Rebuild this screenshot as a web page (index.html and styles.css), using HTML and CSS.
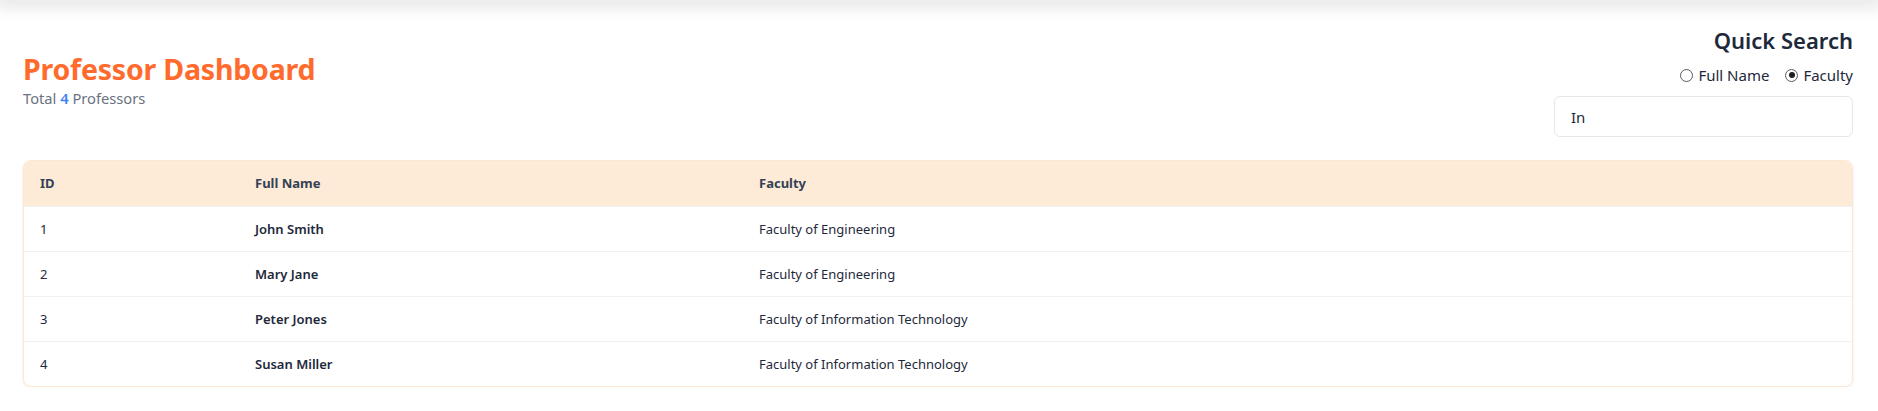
FILE: index.html
```html
<!DOCTYPE html>
<html lang="en">
<head>
<meta charset="utf-8">
<title>Professor Dashboard</title>
<link rel="stylesheet" href="styles.css">
</head>
<body>
<div class="topbar"></div>
<main class="page">
  <header class="head">
    <div class="head-left">
      <h1 class="title">Professor Dashboard</h1>
      <p class="subtitle">Total <span class="count">4</span> Professors</p>
    </div>
    <div class="search">
      <h2 class="search-title">Quick Search</h2>
      <div class="radios">
        <label class="radio"><span class="dot"></span>Full Name</label>
        <label class="radio"><span class="dot checked"></span>Faculty</label>
      </div>
      <div class="input">In</div>
    </div>
  </header>
  <section class="card">
    <table class="table">
      <thead>
        <tr>
          <th class="col-id">ID</th>
          <th class="col-name">Full Name</th>
          <th class="col-fac">Faculty</th>
        </tr>
      </thead>
      <tbody>
        <tr><td>1</td><td class="name">John Smith</td><td>Faculty of Engineering</td></tr>
        <tr><td>2</td><td class="name">Mary Jane</td><td>Faculty of Engineering</td></tr>
        <tr><td>3</td><td class="name">Peter Jones</td><td>Faculty of Information Technology</td></tr>
        <tr><td>4</td><td class="name">Susan Miller</td><td>Faculty of Information Technology</td></tr>
      </tbody>
    </table>
  </section>
</main>
</body>
</html>
```
FILE: styles.css
```css
* { box-sizing: border-box; }
html, body { margin: 0; padding: 0; background: #ffffff; }
body {
  font-family: "Noto Sans", "Open Sans", sans-serif;
  color: #1f2937;
  overflow: hidden;
}
.topbar {
  height: 0;
  box-shadow: 0 0 16px 6px rgba(0, 0, 0, 0.13);
}
.page {
  padding: 25px 25px 0 23px;
}
.head {
  display: flex;
  justify-content: space-between;
  align-items: flex-start;
}
.head-left { margin-top: 25px; }
.title {
  margin: 0;
  font-size: 28.5px;
  line-height: 38px;
  font-weight: 700;
  color: #ff6b2c;
  letter-spacing: -0.2px;
}
.subtitle {
  margin: 0;
  font-size: 14.7px;
  line-height: 20px;
  color: #6b7280;
}
.count { color: #3b82f6; font-weight: 600; }
.search {
  display: flex;
  flex-direction: column;
  align-items: flex-end;
}
.search-title {
  margin: 0;
  font-size: 22px;
  line-height: 30px;
  font-weight: 600;
  color: #1e293b;
}
.radios {
  display: flex;
  gap: 16px;
  margin-top: 10px;
  font-size: 15px;
  line-height: 20px;
  color: #1e293b;
}
.radio { display: flex; align-items: center; gap: 5px; }
.dot {
  width: 13px;
  height: 13px;
  border: 1px solid #555b63;
  border-radius: 50%;
  display: inline-flex;
  align-items: center;
  justify-content: center;
}
.dot.checked::after {
  content: "";
  width: 6px;
  height: 6px;
  border-radius: 50%;
  background: #1f1f1f;
}
.input {
  margin-top: 11px;
  width: 299px;
  height: 41px;
  border: 1px solid #e5e7eb;
  border-radius: 6px;
  padding: 0 16px;
  display: flex;
  align-items: center;
  font-size: 15px;
  color: #1f2937;
}
.card {
  margin-top: 23px;
  border: 1px solid #fbe7d2;
  border-radius: 8px;
  overflow: hidden;
  box-shadow: 0 1px 3px rgba(0, 0, 0, 0.08);
}
.table {
  width: 100%;
  border-collapse: collapse;
  font-size: 13px;
  color: #1e293b;
}
.table th {
  background: #fdebd7;
  text-align: left;
  font-weight: 700;
  color: #334155;
  height: 45px;
  padding: 0 16px;
}
.table td {
  height: 45px;
  padding: 0 16px;
  border-top: 1px solid #f1f1f1;
}
.col-id { width: 215px; }
.col-name { width: 504px; }
.name { font-weight: 600; }
```
